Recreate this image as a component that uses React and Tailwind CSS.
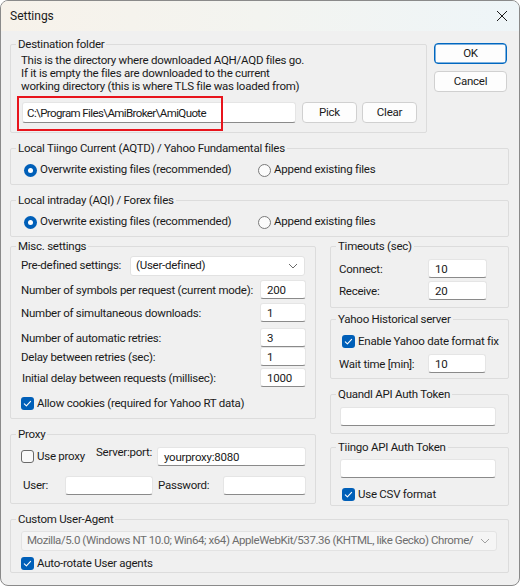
import React from 'react'

// Win11-ish classic dialog: group boxes are fieldsets, heights are fixed so rows land where the
// dialog template puts them.

const Group = ({ title, className = '', children }) => (
  <fieldset className={`border border-[#dcdcdc] rounded-[2px] min-w-0 ${className}`}>
    <legend className="ml-[5px] px-[2px] h-[16px] leading-[16px] text-[#1a1a1a]">{title}</legend>
    {children}
  </fieldset>
)

const Input = ({ value = '', className = '' }) => (
  <div
    className={`h-[19px] bg-white border border-[#e5e5e5] border-b-[#8a8a8a] rounded-[3px] px-[6px] flex items-center leading-[14px] text-[#1a1a1a] overflow-hidden ${className}`}
  >
    {value}
  </div>
)

const Button = ({ children, primary, className = '' }) => (
  <div
    className={`h-[21px] flex items-center justify-center rounded-[4px] bg-[#fdfdfd] text-[#1a1a1a] border ${
      primary ? 'border-[#0067c0] shadow-[inset_0_0_0_0.5px_#0067c0]' : 'border-[#d0d0d0]'
    } ${className}`}
  >
    {children}
  </div>
)

const Check = ({ checked }) =>
  checked ? (
    <div className="w-[13px] h-[13px] shrink-0 rounded-[3px] bg-[#005fb8] flex items-center justify-center">
      <svg width="13" height="13" viewBox="0 0 13 13">
        <path d="M3.3 6.8 L5.4 8.8 L9.6 4.4" fill="none" stroke="white" strokeWidth="1.1" strokeLinecap="round" strokeLinejoin="round" />
      </svg>
    </div>
  ) : (
    <div className="w-[13px] h-[13px] shrink-0 rounded-[3px] border border-[#6a6a6a] bg-[#f9f9f9]" />
  )

const Radio = ({ checked }) =>
  checked ? (
    <div className="w-[13px] h-[13px] shrink-0 rounded-full bg-[#005fb8] flex items-center justify-center">
      <div className="w-[5px] h-[5px] rounded-full bg-white" />
    </div>
  ) : (
    <div className="w-[13px] h-[13px] shrink-0 rounded-full border border-[#7a7a7a] bg-[#fbfbfb]" />
  )

const CheckRow = ({ checked, label, className = '' }) => (
  <div className={`h-[14px] flex items-center ${className}`}>
    <Check checked={checked} />
    <span className="ml-[3px] leading-[14px]">{label}</span>
  </div>
)

const Chevron = ({ color = '#6a6a6a' }) => (
  <svg width="10" height="6" viewBox="0 0 10 6" className="shrink-0">
    <path d="M1 1 L5 5 L9 1" fill="none" stroke={color} strokeWidth="1" />
  </svg>
)

const FieldRow = ({ label, value, className = '', inputW = 'w-[46px]' }) => (
  <div className={`h-[19px] flex items-center ${className}`}>
    <span className="flex-1 leading-[14px]">{label}</span>
    <Input value={value} className={inputW} />
  </div>
)

export default function App() {
  return (
    <div className="w-[520px] h-[586px] bg-[#f0f0f0] border border-[#8a8a8a] rounded-[8px] overflow-hidden whitespace-nowrap text-[11.5px] tracking-[-0.25px] text-[#1a1a1a] font-['Roboto',sans-serif]">
      {/* title bar */}
      <div className="h-[30px] flex items-center justify-between pl-[9px] pr-[10px] bg-linear-to-r from-[#f7f2ea] via-[#f3f4f0] to-[#eef5f8]">
        <span className="text-[12px] tracking-normal">Settings</span>
        <svg width="12" height="12" viewBox="0 0 12 12" className="mr-[1px]">
          <path d="M1 1 L11 11 M11 1 L1 11" stroke="#1a1a1a" strokeWidth="1" />
        </svg>
      </div>

      <div className="pl-[9px] pr-[10px]">
        {/* destination + OK/Cancel */}
        <div className="mt-[5px] flex items-start">
          <Group title="Destination folder" className="w-[417px] h-[97px]">
            <div className="pl-[10px]">
              <div className="mt-[2px] leading-[13px]">
                <div>This is the directory where downloaded AQH/AQD files go.</div>
                <div>If it is empty the files are downloaded to the current</div>
                <div>working directory (this is where TLS file was loaded from)</div>
              </div>
              <div className="relative mt-[9px] flex items-center">
                <Input
                  value={<span className="tracking-[-0.6px]">C:\Program Files\AmiBroker\AmiQuote</span>}
                  className="ml-[1px] w-[274px] h-[21px] pl-[4px]"
                />
                <Button className="ml-[6px] w-[55px]">Pick</Button>
                <Button className="ml-[5px] w-[55px]">Clear</Button>
                <div className="absolute left-[-4px] top-[-6px] w-[206px] h-[35px] border-2 border-[#e8141c]" />
              </div>
            </div>
          </Group>
          <div className="ml-[7px] mt-[7px] flex flex-col gap-[7px]">
            <Button primary className="w-[73px]">OK</Button>
            <Button className="w-[73px]">Cancel</Button>
          </div>
        </div>

        <Group title="Local Tiingo Current (AQTD) / Yahoo Fundamental files" className="mt-[7px] h-[45px]">
          <div className="mt-[6px] h-[16px] flex items-center pl-[13px]">
            <div className="w-[234px] flex items-center">
              <Radio checked />
              <span className="ml-[3px]">Overwrite existing files (recommended)</span>
            </div>
            <Radio />
            <span className="ml-[3px]">Append existing files</span>
          </div>
        </Group>

        <Group title="Local intraday (AQI) / Forex files" className="mt-[7px] h-[45px]">
          <div className="mt-[6px] h-[16px] flex items-center pl-[13px]">
            <div className="w-[234px] flex items-center">
              <Radio checked />
              <span className="ml-[3px]">Overwrite existing files (recommended)</span>
            </div>
            <Radio />
            <span className="ml-[3px]">Append existing files</span>
          </div>
        </Group>

        <div className="mt-[1px] flex items-start">
          {/* left column */}
          <div className="w-[306px]">
            <Group title="Misc. settings" className="h-[181px]">
              <div className="pl-[10px] pr-[9px]">
                <div className="mt-[2px] h-[20px] flex items-center">
                  <span className="w-[109px]">Pre-defined settings:</span>
                  <div className="w-[175px] h-[20px] bg-white border border-[#e2e2e2] rounded-[3px] flex items-center justify-between pl-[5px] pr-[6px]">
                    <span>(User-defined)</span>
                    <Chevron />
                  </div>
                </div>
                <FieldRow className="mt-[4px]" label="Number of symbols per request (current mode):" value="200" />
                <FieldRow className="mt-[4px]" label="Number of simultaneous downloads:" value="1" />
                <FieldRow className="mt-[6px]" label="Number of automatic retries:" value="3" />
                <FieldRow label="Delay between retries (sec):" value="1" />
                <FieldRow className="mt-[2px]" label={<span className="ml-[1px]">Initial delay between requests (millisec):</span>} value="1000" />
                <CheckRow className="mt-[9px]" checked label="Allow cookies (required for Yahoo RT data)" />
              </div>
            </Group>

            <Group title="Proxy" className="mt-[7px] h-[78px]">
              <div className="pl-[10px] pr-[9px]">
                <div className="mt-[5px] h-[19px] flex items-center">
                  <div className="w-[75px] flex items-center">
                    <Check />
                    <span className="ml-[3px]">Use proxy</span>
                  </div>
                  <span className="w-[61px] self-start -mt-[2px] leading-[14px]">Server:port:</span>
                  <Input value="yourproxy:8080" className="w-[149px]" />
                </div>
                <div className="mt-[10px] h-[19px] flex items-center">
                  <span className="w-[44px] pl-[2px]">User:</span>
                  <Input className="w-[88px]" />
                  <span className="ml-[5px] w-[65px]">Password:</span>
                  <Input className="w-[83px]" />
                </div>
              </div>
            </Group>
          </div>

          {/* right column */}
          <div className="ml-[14px] w-[179px]">
            <Group title="Timeouts (sec)" className="h-[70px]">
              <div className="pl-[8px]">
                <FieldRow className="mt-[5px]" label="Connect:" value="10" inputW="w-[59px] mr-[21px]" />
                <FieldRow className="mt-[3px]" label="Receive:" value="20" inputW="w-[59px] mr-[21px]" />
              </div>
            </Group>

            <Group title="Yahoo Historical server" className="mt-[3px] h-[68px]">
              <div className="pl-[8px]">
                <CheckRow className="mt-[7px] ml-[3px]" checked label="Enable Yahoo date format fix" />
                <FieldRow className="mt-[6px]" label="Wait time [min]:" value="10" inputW="w-[58px] mr-[22px]" />
              </div>
            </Group>

            <Group title="Quandl API Auth Token" className="mt-[7px] h-[48px]">
              <div className="pl-[9px] pr-[11px]">
                <Input className="mt-[5px] w-[156px]" />
              </div>
            </Group>

            <Group title="Tiingo API Auth Token" className="mt-[5px] h-[67px]">
              <div className="pl-[9px] pr-[11px]">
                <Input className="mt-[4px] w-[156px]" />
                <CheckRow className="mt-[9px] ml-[2px]" checked label="Use CSV format" />
              </div>
            </Group>
          </div>
        </div>

        <Group title="Custom User-Agent" className="mt-[5px] h-[62px]">
          <div className="pl-[10px] pr-[10px]">
            <div className="mt-[4px] w-[476px] h-[20px] bg-[#f5f5f5] border border-[#e3e3e3] rounded-[3px] flex items-center pl-[5px] pr-[6px] text-[#6e6e6e]">
              <span className="flex-1 overflow-hidden tracking-[-0.42px]">
                Mozilla/5.0 (Windows NT 10.0; Win64; x64) AppleWebKit/537.36 (KHTML, like Gecko) Chrome/
              </span>
              <span className="ml-[4px] flex">
                <Chevron color="#a0a0a0" />
              </span>
            </div>
            <CheckRow className="mt-[5px]" checked label="Auto-rotate User agents" />
          </div>
        </Group>
      </div>
    </div>
  )
}
